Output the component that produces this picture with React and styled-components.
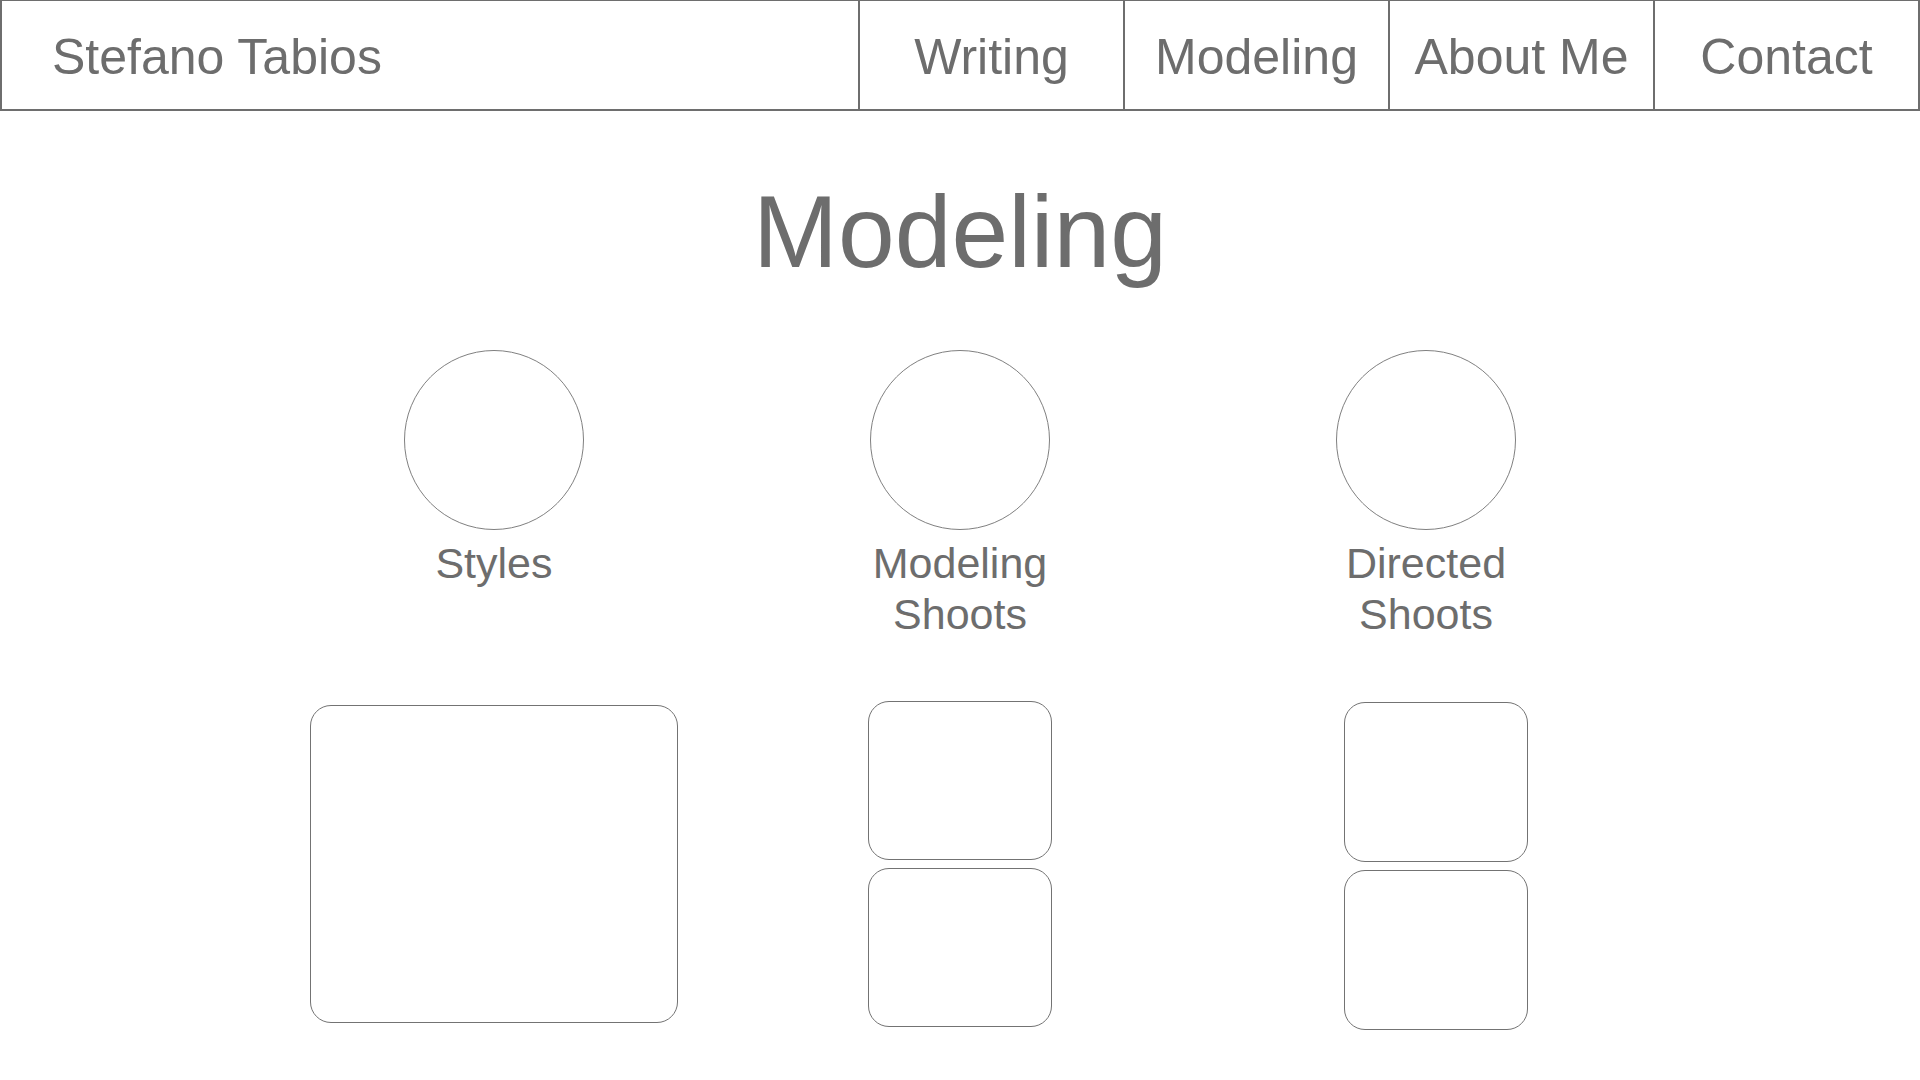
import React from "react";
import styled, { createGlobalStyle } from "styled-components";

const GlobalStyle = createGlobalStyle`
  body {
    margin : 0;
    padding : 0;
    background : #ffffff;
    font-family : "Liberation Sans", Arial, sans-serif;
    color : #6d6d6d;
  }
`;

const Header = styled.header`
  display : flex;
  height : 111px;
  box-sizing : border-box;
  border : 2px solid #6e6e6e;
  border-top-width : 1px;
`;

const Brand = styled.div`
  flex : 1;
  display : flex;
  align-items : center;
  padding : 4px 0 0 50px;
  font-size : 50px;
`;

const NavItem = styled.div`
  flex : 0 0 265px;
  box-sizing : border-box;
  display : flex;
  align-items : center;
  justify-content : center;
  padding-top : 4px;
  border-left : 2px solid #6e6e6e;
  font-size : 50px;
`;

const Title = styled.h1`
  margin : 63px 0 0;
  font-size : 102px;
  line-height : 117px;
  font-weight : normal;
  text-align : center;
`;

const Columns = styled.div`
  display : grid;
  grid-template-columns : repeat(3, 466px);
  justify-content : center;
  justify-items : center;
  align-items : start;
  margin-top : ${props => props.top}px;
`;

const Category = styled.div`
  display : flex;
  flex-direction : column;
  align-items : center;
`;

const Circle = styled.div`
  width : 180px;
  height : 180px;
  box-sizing : border-box;
  border : 1px solid #808080;
  border-radius : 50%;
`;

const Label = styled.div`
  margin-top : 8px;
  font-size : 43px;
  line-height : 51px;
  text-align : center;
`;

const Stack = styled.div`
  display : flex;
  flex-direction : column;
  gap : 8px;
  margin-top : ${props => props.top || 0}px;
  margin-left : ${props => props.shift || 0}px;
`;

const Tile = styled.div`
  width : ${props => props.w}px;
  height : ${props => props.h}px;
  box-sizing : border-box;
  border : 1.5px solid #737373;
  border-radius : 21px;
`;

const categories = [
  ["Styles"],
  ["Modeling", "Shoots"],
  ["Directed", "Shoots"],
];

export default function App() {
  return (
    <React.Fragment>
      <GlobalStyle/>
      <Header>
        <Brand>Stefano Tabios</Brand>
        <NavItem>Writing</NavItem>
        <NavItem>Modeling</NavItem>
        <NavItem>About Me</NavItem>
        <NavItem>Contact</NavItem>
      </Header>
      <Title>Modeling</Title>
      <Columns top={59}>
        {categories.map(lines => (
          <Category key={lines.join(" ")}>
            <Circle/>
            <Label>{lines.map(l => <div key={l}>{l}</div>)}</Label>
          </Category>
        ))}
      </Columns>
      <Columns top={61}>
        <Stack top={4}>
          <Tile w={368} h={318}/>
        </Stack>
        <Stack>
          <Tile w={184} h={159}/>
          <Tile w={184} h={159}/>
        </Stack>
        <Stack top={1} shift={20}>
          <Tile w={184} h={160}/>
          <Tile w={184} h={160}/>
        </Stack>
      </Columns>
    </React.Fragment>
  );
}
